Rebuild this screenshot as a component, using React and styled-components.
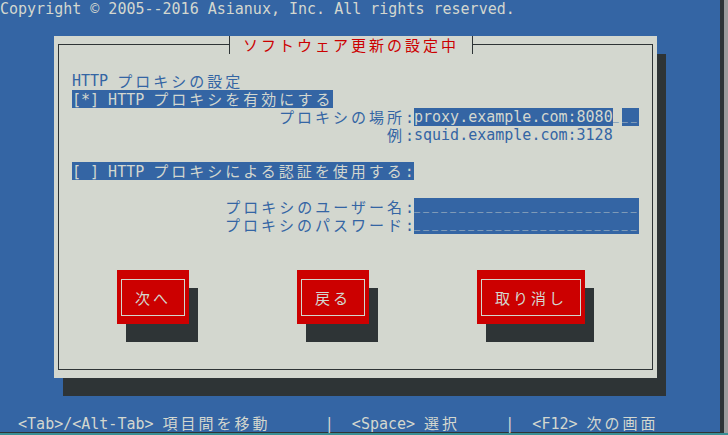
import React from "react";
import styled, { createGlobalStyle } from "styled-components";

// terminal cell size (80x24 screen)
const C = 9;
const R = 18;

const BLUE = "#3465a4";
const GREY = "#d3d7cf";
const DARK = "#2e3436";
const RED = "#cc0000";

const GlobalStyle = createGlobalStyle`
  html, body {
    margin: 0;
    padding: 0;
    overflow: hidden;
    background: #3a8f94;
  }
`;

const Viewport = styled.div`
  width: 728px;
  height: 435px;
  background: #3a8f94;
`;

const Upper = styled.div`
  display: flex;
  height: 433px;
`;

const Screen = styled.div`
  width: ${80 * C}px;
  height: ${24 * R}px;
  border-bottom: 1px solid ${DARK};
  display: flex;
  flex-direction: column;
  background: ${BLUE};
  color: ${GREY};
  font-family: "DejaVu Sans Mono", "Noto Sans CJK JP", monospace;
  font-size: 15px;
  line-height: ${R}px;
  white-space: pre;
`;

const Edge = styled.div`
  width: 4px;
  border-left: 4px solid ${DARK};
  background: #9c9c9c;
`;

const Line = styled.div`
  height: ${R}px;
  flex: none;
`;

const Desk = styled.div`
  flex: 1;
  padding: ${R}px 0 0 ${6 * C}px;
`;

const Window = styled.div`
  width: ${67 * C}px;
  height: ${19 * R}px;
  box-sizing: border-box;
  padding: 0 4px 8px;
  display: flex;
  flex-direction: column;
  background: ${GREY};
  color: ${BLUE};
  box-shadow: ${C}px ${R}px 0 ${DARK};
`;

const TitleBar = styled.div`
  display: flex;
  height: ${R}px;
  flex: none;
`;

const Corner = styled.div`
  box-sizing: border-box;
  margin-top: 8px;
  border-top: 1px solid ${DARK};
  ${(p) =>
    p.$side === "left"
      ? `width: ${19 * C}px; border-left: 1px solid ${DARK};`
      : `flex: 1; border-right: 1px solid ${DARK};`}
`;

const Title = styled.div`
  box-sizing: border-box;
  width: ${28 * C - 8}px;
  border-left: 1px solid ${DARK};
  border-right: 1px solid ${DARK};
  color: ${RED};
  text-align: center;
`;

const Frame = styled.div`
  flex: 1;
  display: flex;
  flex-direction: column;
  border: 1px solid ${DARK};
  border-top: none;
  padding: 0 4px 9px;
`;

const Gap = styled.div`
  height: ${(p) => p.$rows * R}px;
  flex: none;
`;

const Row = styled.div`
  display: flex;
  height: ${R}px;
  flex: none;
  padding-left: ${(p) => (p.$indent || 0) * C}px;
`;

const Highlight = styled.span`
  background: ${BLUE};
  color: ${GREY};
`;

const Label = styled.span`
  width: ${39 * C}px;
  text-align: right;
`;

const Entry = styled.span`
  width: ${25 * C}px;
  background: ${BLUE};
  color: ${GREY};
`;

const Cursor = styled.span`
  background: ${GREY};
  color: ${BLUE};
`;

// empty entry cells: short dashes sitting on the baseline, one per cell
const Blank = styled.span`
  font-size: 10px;
  letter-spacing: ${C - 6}px;
  vertical-align: 2px;
  line-height: 10px;
`;

const ButtonRow = styled.div`
  display: flex;
  height: ${3 * R}px;
  flex: none;
  padding-left: ${6 * C}px;
  gap: ${12 * C}px;
`;

const Button = styled.button`
  width: ${(p) => p.$cols * C}px;
  height: ${3 * R}px;
  box-sizing: border-box;
  padding: 9px 4px 8px;
  border: none;
  margin: 0;
  background: ${RED};
  color: ${GREY};
  font: inherit;
  line-height: ${R}px;
  box-shadow: ${C}px ${R}px 0 ${DARK};
  cursor: pointer;
`;

const Face = styled.span`
  height: 100%;
  display: flex;
  align-items: center;
  justify-content: center;
  border: 1px solid ${GREY};
  box-sizing: border-box;
`;

const Wide = styled.span`
  font-family: "Noto Sans CJK JP", sans-serif;
  letter-spacing: 3px;
`;

// full-width characters take two terminal cells
const WIDE = /([\u2e80-\u9fff\uf900-\ufaff\uff01-\uff60]+)/;

function T({ children }) {
  return String(children)
    .split(WIDE)
    .map((part, i) => (i % 2 === 1 ? <Wide key={i}>{part}</Wide> : part));
}

function Field({ label, value = "", cursor = -1 }) {
  const cells = 25 - value.length;
  const before = cursor >= 0 ? cursor : cells;
  return (
    <Row>
      <Label>
        <T>{label}</T>
      </Label>
      <Entry>
        {value}
        {before > 0 && <Blank>{"_".repeat(before)}</Blank>}
        {cursor >= 0 && (
          <Cursor>
            <Blank>_</Blank>
          </Cursor>
        )}
        {cursor >= 0 && <Blank>{"_".repeat(cells - cursor - 1)}</Blank>}
      </Entry>
    </Row>
  );
}

export default function App() {
  return (
    <>
      <GlobalStyle />
      <Viewport>
        <Upper>
          <Screen>
            <Line>Copyright © 2005--2016 Asianux, Inc. All rights reserved.</Line>
            <Desk>
              <Window>
                <TitleBar>
                  <Corner $side="left" />
                  <Title>
                    <T>ソフトウェア更新の設定中</T>
                  </Title>
                  <Corner $side="right" />
                </TitleBar>
                <Frame>
                  <Gap $rows={1} />
                  <Row $indent={1}>
                    <T>HTTP プロキシの設定</T>
                  </Row>
                  <Row $indent={1}>
                    <Highlight>
                      <T>[*] HTTP プロキシを有効にする</T>
                    </Highlight>
                  </Row>
                  <Field label="プロキシの場所:" value="proxy.example.com:8080" cursor={0} />
                  <Row>
                    <Label>
                      <T>例:</T>
                    </Label>
                    <span>squid.example.com:3128</span>
                  </Row>
                  <Gap $rows={1} />
                  <Row $indent={1}>
                    <Highlight>
                      <T>[ ] HTTP プロキシによる認証を使用する:</T>
                    </Highlight>
                  </Row>
                  <Gap $rows={1} />
                  <Field label="プロキシのユーザー名:" />
                  <Field label="プロキシのパスワード:" />
                  <Gap $rows={2} />
                  <ButtonRow>
                    <Button $cols={8}>
                      <Face>
                        <T>次へ</T>
                      </Face>
                    </Button>
                    <Button $cols={8}>
                      <Face>
                        <T>戻る</T>
                      </Face>
                    </Button>
                    <Button $cols={12}>
                      <Face>
                        <T>取り消し</T>
                      </Face>
                    </Button>
                  </ButtonRow>
                </Frame>
              </Window>
            </Desk>
            <Line>
              <T>{"  <Tab>/<Alt-Tab> 項目間を移動      |  <Space> 選択     |  <F12> 次の画面"}</T>
            </Line>
          </Screen>
          <Edge />
        </Upper>
      </Viewport>
    </>
  );
}
